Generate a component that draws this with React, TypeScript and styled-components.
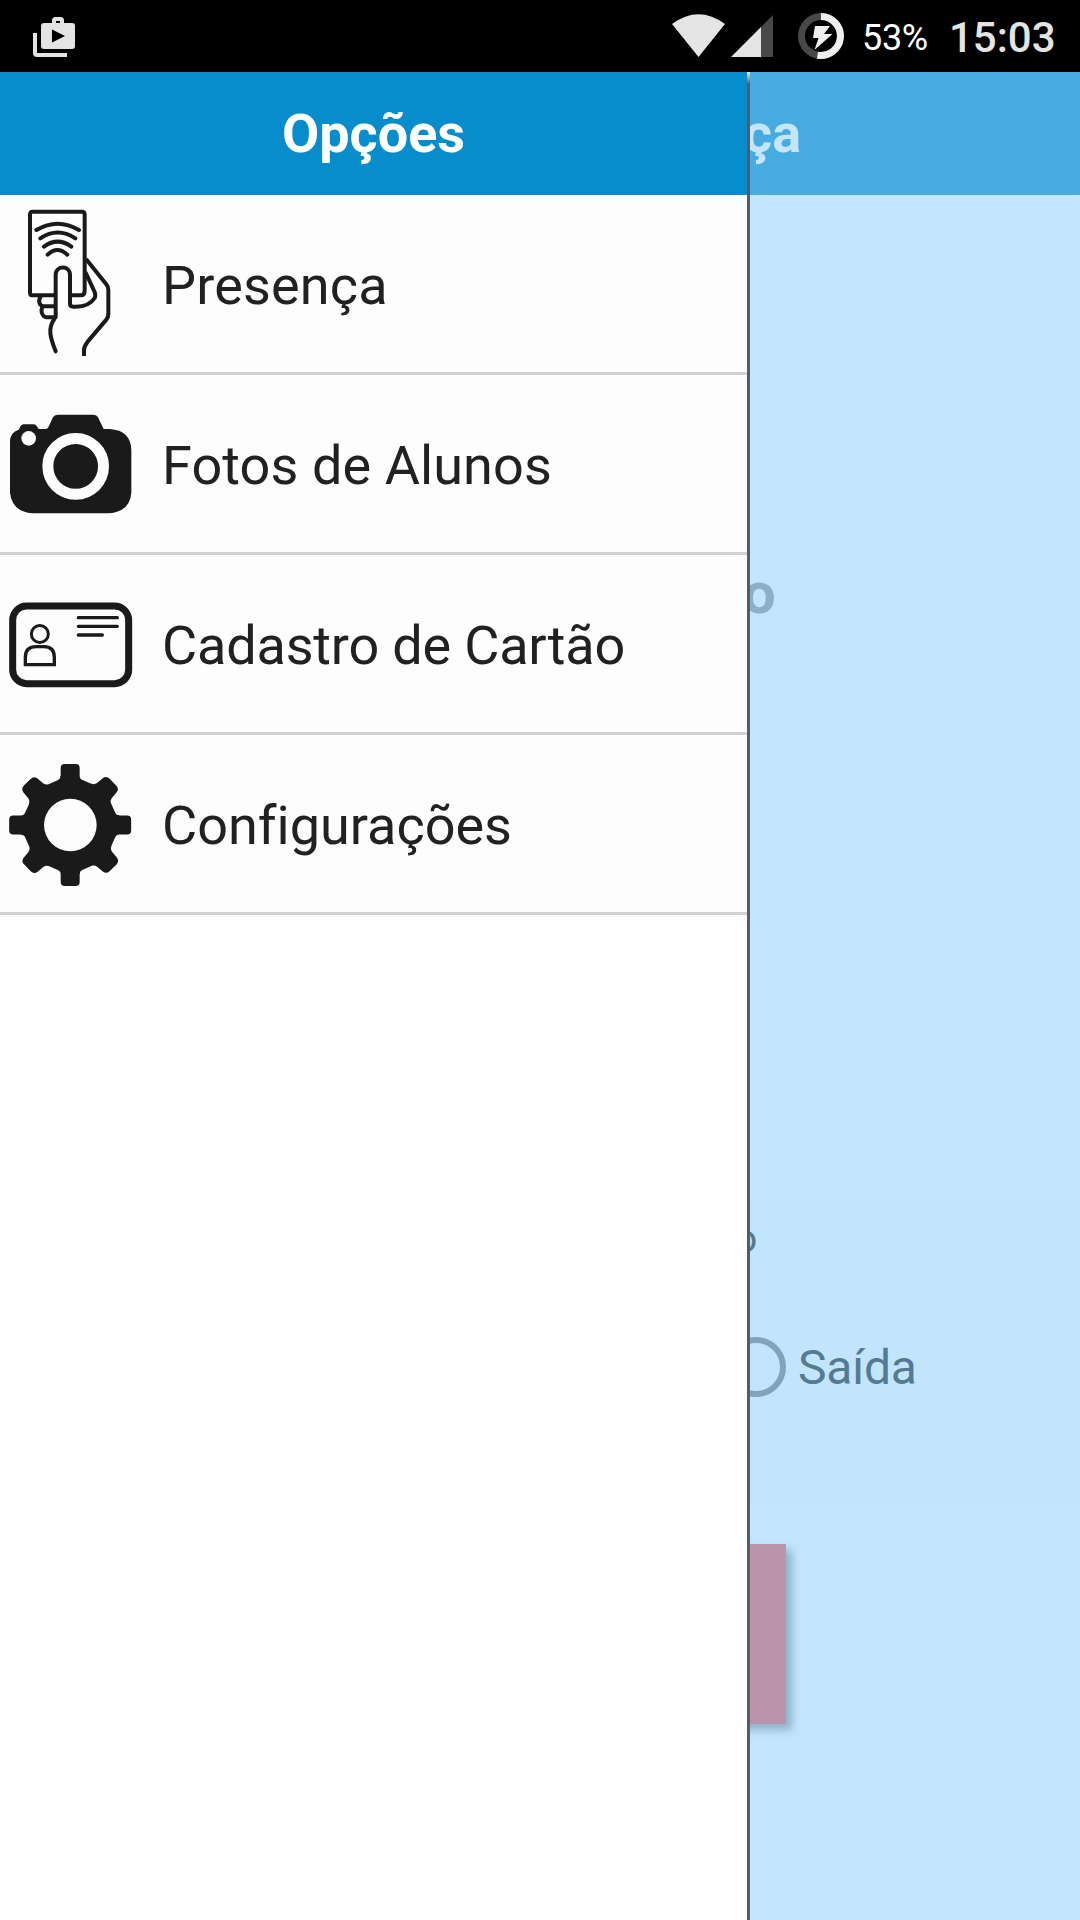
import React from "react";
import styled, { createGlobalStyle } from "styled-components";

const GlobalStyle = createGlobalStyle`
  * { box-sizing: border-box; }
  html, body { margin: 0; padding: 0; background: #fff; }
  body { font-family: Roboto, "Noto Sans", sans-serif; font-variant-ligatures: none; }
`;

const Screen = styled.div`
  display: flex;
  flex-direction: column;
  width: 1080px;
  height: 1920px;
  overflow: hidden;
`;

const StatusBar = styled.header`
  display: flex;
  align-items: center;
  height: 72px;
  flex: none;
  padding: 0 26px 0 33px;
  background: #000;
`;

const StatusIcons = styled.div`
  display: flex;
  align-items: center;
  margin-left: auto;
`;

const StatusIcon = styled.svg<{ $gap?: number }>`
  display: block;
  flex: none;
  margin-right: ${(p) => p.$gap ?? 0}px;
`;

const BatteryText = styled.span`
  width: 87px;
  font-size: 36px;
  line-height: 72px;
  padding-top: 3px;
  letter-spacing: -0.3px;
  color: #fff;
`;

const Clock = styled.span`
  width: 105px;
  font-size: 42px;
  font-weight: 500;
  line-height: 72px;
  padding-top: 3px;
  color: #e4e4e4;
  white-space: nowrap;
`;

const Body = styled.div`
  display: flex;
  flex: 1;
  min-height: 0;
`;

const Drawer = styled.nav`
  width: 747px;
  flex: none;
  background: #fefefe;
`;

const DrawerTitle = styled.h1`
  display: flex;
  align-items: center;
  justify-content: center;
  height: 123px;
  margin: 0;
  background: #088dcc;
  color: #fff;
  font-size: 54px;
  font-weight: 700;
`;

const Menu = styled.ul`
  margin: 0;
  padding: 0;
  list-style: none;
`;

const MenuItem = styled.li`
  display: flex;
  align-items: center;
  height: 180px;
  border-bottom: 3px solid #d0d0d0;
  background: #fdfdfd;
`;

const MenuLabel = styled.span<{ $tracking: number }>`
  padding-top: 3px;
  color: #212121;
  font-size: 54px;
  letter-spacing: ${(p) => p.$tracking}px;
`;

const MenuIcon = styled.svg`
  display: block;
  flex: none;
  width: 140px;
  height: 177px;
  margin-right: 22px;
`;

const Divider = styled.div`
  width: 3px;
  flex: none;
  background: linear-gradient(#e8e8e8 0, #575c63 12px);
`;

const Page = styled.main`
  flex: 1;
  min-width: 0;
  overflow: hidden;
  display: flex;
  flex-direction: column;
  background: #c3e6fd;
`;

const PageTitle = styled.div`
  display: flex;
  align-items: center;
  height: 123px;
  flex: none;
  background: #48abe0;
  color: #c3e6fd;
  font-size: 54px;
  font-weight: 700;
  span { margin-left: -6px; }
`;

const Heading = styled.div`
  height: 1005px;
  flex: none;
  padding-top: 363px;
  color: #8cb0c8;
  font-size: 58px;
  font-weight: 700;
  line-height: 70px;
  span { margin-left: -7px; }
`;

const Movement = styled.section`
  height: 303px;
  flex: none;
  background: #c2e5fb;
  color: #557b92;
`;

const MovementLabel = styled.div`
  height: 137px;
  padding-top: 16px;
  font-size: 39px;
  line-height: 46px;
  span { margin-left: -15px; }
`;

const RadioOption = styled.div`
  display: flex;
  align-items: center;
  height: 60px;
  font-size: 48px;
  letter-spacing: -0.2px;
`;

const Radio = styled.i`
  width: 60px;
  height: 60px;
  flex: none;
  margin: 0 12px 0 -24px;
  border: 6px solid #80a4ba;
  border-radius: 50%;
`;

const ActionButton = styled.button`
  width: 66px;
  height: 180px;
  flex: none;
  margin: 41px 0 0 -30px;
  padding: 0;
  border: 0;
  background: #b994ab;
  box-shadow: 6px 6px 8px rgba(90, 130, 155, 0.5);
`;

const INK = "#1a1a1a";

const CardHandIcon = () => (
  <MenuIcon viewBox="0 15 420 531" fill="none" stroke={INK} strokeWidth="12" strokeLinejoin="round" strokeLinecap="round">
    <path d="M165 316H98Q90 316 90 308V73Q90 65 98 65H246Q254 65 254 73V302Q254 316 242 316H215" />
    <path d="M109 120Q173 82 237 120M121 145Q173 110 226 145M132 170Q173 140 214 170M143 194Q172 166 202 194" />
    <path d="M167 382V255C167 225 210 225 210 255V342Q210 350 220 350Q265 353 284 324Q288 317 284 306L258 250" />
    <path d="M258 207L320 284Q325 290 325 300V372Q325 382 319 389L263 455Q252 469 252 481V492" strokeLinecap="butt" />
    <path d="M252 481V492" strokeLinecap="square" />
    <path d="M122 319Q113 333 122 345Q125 349 134 349H164M127 350Q121 365 130 377Q134 382 145 382H164M163 387C143 414 150 442 167 484" />
  </MenuIcon>
);

const CameraIcon = () => (
  <MenuIcon viewBox="0 15 420 531">
    <path
      fill={INK}
      d="M30 215Q30 187 56 179L62 168Q65 163 71 163H101Q107 163 110 168L116 177H137Q143 177 145 172L159 142Q163 134 173 134H281Q290 134 294 142L311 177H329Q394 181 394 243V368Q390 425 327 430H97Q36 425 30 368Z"
    />
    <circle cx="86" cy="205" r="22" fill="#fdfdfd" />
    <circle cx="227" cy="289" r="83.5" fill="none" stroke="#fdfdfd" strokeWidth="33" />
  </MenuIcon>
);

const IdCardIcon = () => (
  <MenuIcon viewBox="0 15 420 531" fill="none" stroke={INK}>
    <rect x="38" y="168" width="348" height="233" rx="42" strokeWidth="21" />
    <circle cx="119.500" cy="252" r="25.500" strokeWidth="9" />
    <path d="M76 344V322Q76 290 109 290H131Q163 290 163 322V344Z" strokeWidth="10" />
    <path d="M235 203H352M235 229H352M235 255H307" strokeWidth="10" strokeLinecap="round" />
  </MenuIcon>
);

const GearIcon = () => (
  <MenuIcon viewBox="0 15 420 531" fill={INK}>
    {[0, 90, 180, 270].map((a) => (
      <g key={a} transform={`rotate(${a} 210.500 285)`}>
        <path d="M182 200V114Q182 102 194 102H227Q239 102 239 114V137Q239 147 248 150L270 160Q282 165 290 160L308 145Q319 137 329 146L349 167Q358 176 350 187L335 205Q330 212 333 220L345 247Q348 256 358 256L340 310H210Z" />
      </g>
    ))}
    <circle cx="211" cy="285" r="79" fill="#fdfdfd" />
  </MenuIcon>
);

const items = [
  { label: "Presença", Icon: CardHandIcon, tracking: 0.15 },
  { label: "Fotos de Alunos", Icon: CameraIcon, tracking: 0.1 },
  { label: "Cadastro de Cartão", Icon: IdCardIcon, tracking: -0.18 },
  { label: "Configurações", Icon: GearIcon, tracking: 0 },
];

export default function App() {
  return (
    <Screen>
      <GlobalStyle />
      <StatusBar>
        <StatusIcon width="42" height="72" viewBox="33 0 42 72">
          <path
            fill="#e4e4e4"
            fillRule="evenodd"
            d="M52 23V20.500Q52 17 55.500 17H60.500Q64 17 64 20.500V23H72Q75 23 75 26V46Q75 49 72 49H44Q41 49 41 46V26Q41 23 44 23ZM56 23H60V21H56ZM52 29.500V42.500L65 36Z"
          />
          <path fill="#e4e4e4" d="M33 33H37V53H67V57H37Q33 57 33 53Z" />
        </StatusIcon>
        <StatusIcons>
          <StatusIcon width="54" height="72" viewBox="672 0 54 72" $gap={5}>
            <path fill="#e4e4e4" d="M672 24Q698.500 4.500 725 24L698.500 57Z" />
          </StatusIcon>
          <StatusIcon width="42" height="72" viewBox="731 0 42 72" $gap={25}>
            <path fill="#484848" d="M761 27L773 15V57H761Z" />
            <path fill="#e4e4e4" d="M731 57L761 27V57Z" />
          </StatusIcon>
          <StatusIcon width="46" height="72" viewBox="798 0 46 72" $gap={18}>
            <circle cx="821" cy="36" r="19.500" fill="none" stroke="#484848" strokeWidth="7" />
            <path d="M821 16.500A19.500 19.500 0 1 1 817.500 55.200" fill="none" stroke="#efefef" strokeWidth="7" />
            <path fill="#efefef" d="M815 26H830L824 34H832.500L814.500 50L818.500 38H813Z" />
          </StatusIcon>
          <BatteryText>53%</BatteryText>
          <Clock>15:03</Clock>
        </StatusIcons>
      </StatusBar>
      <Body>
        <Drawer>
          <DrawerTitle>Opções</DrawerTitle>
          <Menu>
            {items.map(({ label, Icon, tracking }) => (
              <MenuItem key={label}>
                <Icon />
                <MenuLabel $tracking={tracking}>{label}</MenuLabel>
              </MenuItem>
            ))}
          </Menu>
        </Drawer>
        <Divider />
        <Page>
          <PageTitle><span>ça</span></PageTitle>
          <Heading><span>o</span></Heading>
          <Movement>
            <MovementLabel><span>o</span></MovementLabel>
            <RadioOption>
              <Radio />
              Saída
            </RadioOption>
          </Movement>
          <ActionButton />
        </Page>
      </Body>
    </Screen>
  );
}
